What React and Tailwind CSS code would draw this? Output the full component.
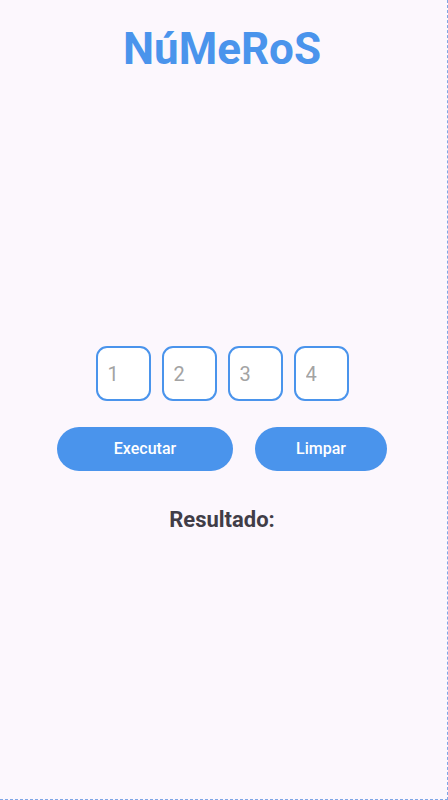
import React from "react";

export default function App() {
  const nums = ["1", "2", "3", "4"];
  return (
    <div
      className="w-[448px] h-[800px] bg-[#fcf7fd] border-r border-b border-dashed border-[#7fa6e6] overflow-hidden"
      style={{ fontFamily: "Roboto, 'Liberation Sans', sans-serif" }}
    >
      <div className="w-[444px] flex flex-col items-center">
        <h1 className="mt-[27px] text-[44px] leading-[44px] font-bold text-[#4a94ec]">NúMeRoS</h1>
        <div className="mt-[275px] flex gap-[11px]">
          {nums.map((n) => (
            <input
              key={n}
              placeholder={n}
              className="w-[55px] h-[55px] rounded-[11px] border-2 border-[#4a94ec] bg-white pl-[10px] text-[20px] text-[#555] placeholder:text-[#a3a3a3] outline-none"
            />
          ))}
        </div>
        <div className="mt-[26px] flex gap-[22px]">
          <button className="w-[176px] h-[44px] rounded-full bg-[#4a94ec] text-white text-[16px] font-medium">
            Executar
          </button>
          <button className="w-[132px] h-[44px] rounded-full bg-[#4a94ec] text-white text-[16px] font-medium">
            Limpar
          </button>
        </div>
        <p className="mt-[35px] text-[22px] leading-[28px] font-bold text-[#413d47]">Resultado:</p>
      </div>
    </div>
  );
}
